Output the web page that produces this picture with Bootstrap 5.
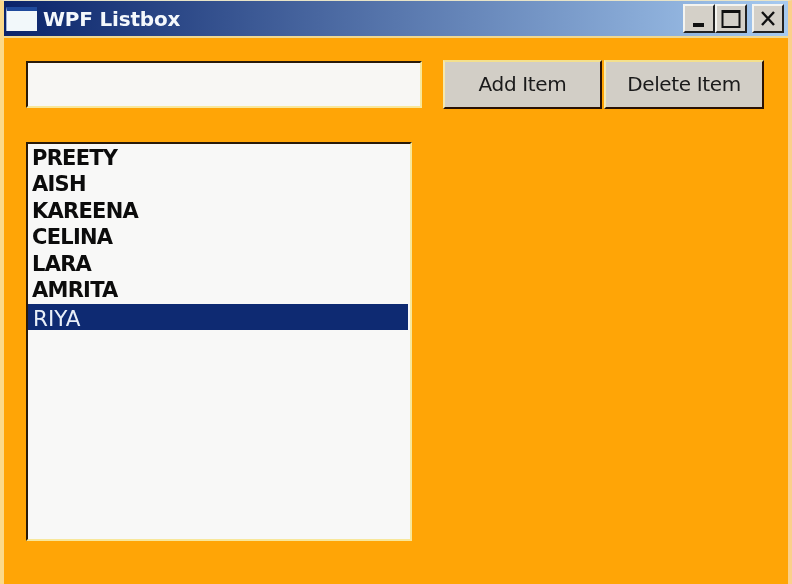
<!DOCTYPE html>
<html lang="en">
<head>
<meta charset="utf-8">
<title>WPF Listbox</title>
<link href="https://cdn.jsdelivr.net/npm/bootstrap@5.3.0/dist/css/bootstrap.min.css" rel="stylesheet">
<style>
html,body{height:584px;overflow:hidden;background:#ffa500;}
body{font-family:"DejaVu Sans","Liberation Sans",sans-serif;}
.wpf-frame{width:792px;height:584px;background:#ffa506;border-left:4px solid #fbd98a;border-right:4px solid #fbd08a;border-top:1px solid #e8e4c8;filter:blur(.45px);}
.wpf-title{height:37px;background:linear-gradient(90deg,#0a246a,#a6caf0);border-bottom:2px solid #f0d890;padding:0 4px 0 2px;}
.wpf-appicon{width:31px;height:24px;background:#f2f8fa;border-top:4px solid #1f4a9c;border-left:1px solid #9fb4d8;}
.wpf-caption{color:#f4f8fc;font-weight:700;font-size:20px;line-height:1;letter-spacing:-.2px;margin-left:6px;}
.wpf-capbtn{width:32px;height:29px;background:#d4d0c8;border:2px solid;border-color:#f4f4f0 #222 #222 #f4f4f0;padding:0;}
.wpf-capbtn svg{display:block;margin:auto;}
.wpf-capbtn+.wpf-capbtn+.wpf-capbtn{margin-left:5px;}
.wpf-body{padding:22px 24px 0 22px;}
.wpf-input{width:397px;height:47px;margin-top:1px;background:#f8f7f4;border:2px solid;border-color:#2a1a08 #f8e79a #f8e79a #2a1a08;}
.wpf-btns{margin-left:21px;}
.wpf-btn{width:159px;height:49px;background:#d2cec6;color:#1a1a1a;font-size:20px;line-height:1;border:2px solid;border-color:#f4e08c #2a1204 #2a1204 #f4e8b0;border-radius:0;padding:0 0 2px;font-family:"DejaVu Sans",sans-serif;letter-spacing:-.35px;}
.wpf-btn+.wpf-btn{margin-left:2px;width:160px;}
.wpf-list{width:386px;height:399px;margin-top:33px;background:#f8f8f7;border:2px solid;border-color:#2a1a08 #f8e79a #f8e79a #2a1a08;padding-top:1px;}
.wpf-item{height:26.4px;line-height:26px;padding-left:4px;font-size:21px;font-weight:700;color:#0c0c0c;letter-spacing:-.75px;}
.wpf-item.wpf-sel{background:#0e2a72;color:#e8eef8;font-weight:400;font-size:21.5px;letter-spacing:0;height:26px;line-height:29px;margin:1px 2px 0 0;padding-left:5px;overflow:hidden;}
</style>
</head>
<body>
<div class="wpf-frame d-flex flex-column">
  <div class="wpf-title d-flex align-items-center">
    <div class="wpf-appicon"></div>
    <div class="wpf-caption flex-grow-1">WPF Listbox</div>
    <div class="d-flex">
      <button class="wpf-capbtn" type="button" aria-label="Minimize"><svg width="18" height="18" viewBox="0 0 18 18"><rect x="3" y="13" width="11" height="4" fill="#111"/></svg></button>
      <button class="wpf-capbtn" type="button" aria-label="Maximize"><svg width="20" height="20" viewBox="0 0 20 20"><path d="M1.5 2h17v16h-17z" fill="none" stroke="#111" stroke-width="2"/><path d="M1.5 3h17" stroke="#111" stroke-width="2"/></svg></button>
      <button class="wpf-capbtn" type="button" aria-label="Close"><svg width="18" height="18" viewBox="0 0 18 18"><path d="M3 2l12 13M15 2L3 15" stroke="#111" stroke-width="2.4"/></svg></button>
    </div>
  </div>
  <div class="wpf-body">
    <div class="d-flex align-items-start">
      <input class="wpf-input" type="text" aria-label="Item">
      <div class="wpf-btns d-flex">
        <button class="wpf-btn" type="button">Add Item</button>
        <button class="wpf-btn" type="button">Delete Item</button>
      </div>
    </div>
    <div class="wpf-list">
      <div class="wpf-item">PREETY</div>
      <div class="wpf-item">AISH</div>
      <div class="wpf-item">KAREENA</div>
      <div class="wpf-item">CELINA</div>
      <div class="wpf-item">LARA</div>
      <div class="wpf-item">AMRITA</div>
      <div class="wpf-item wpf-sel">RIYA</div>
    </div>
  </div>
</div>
</body>
</html>
